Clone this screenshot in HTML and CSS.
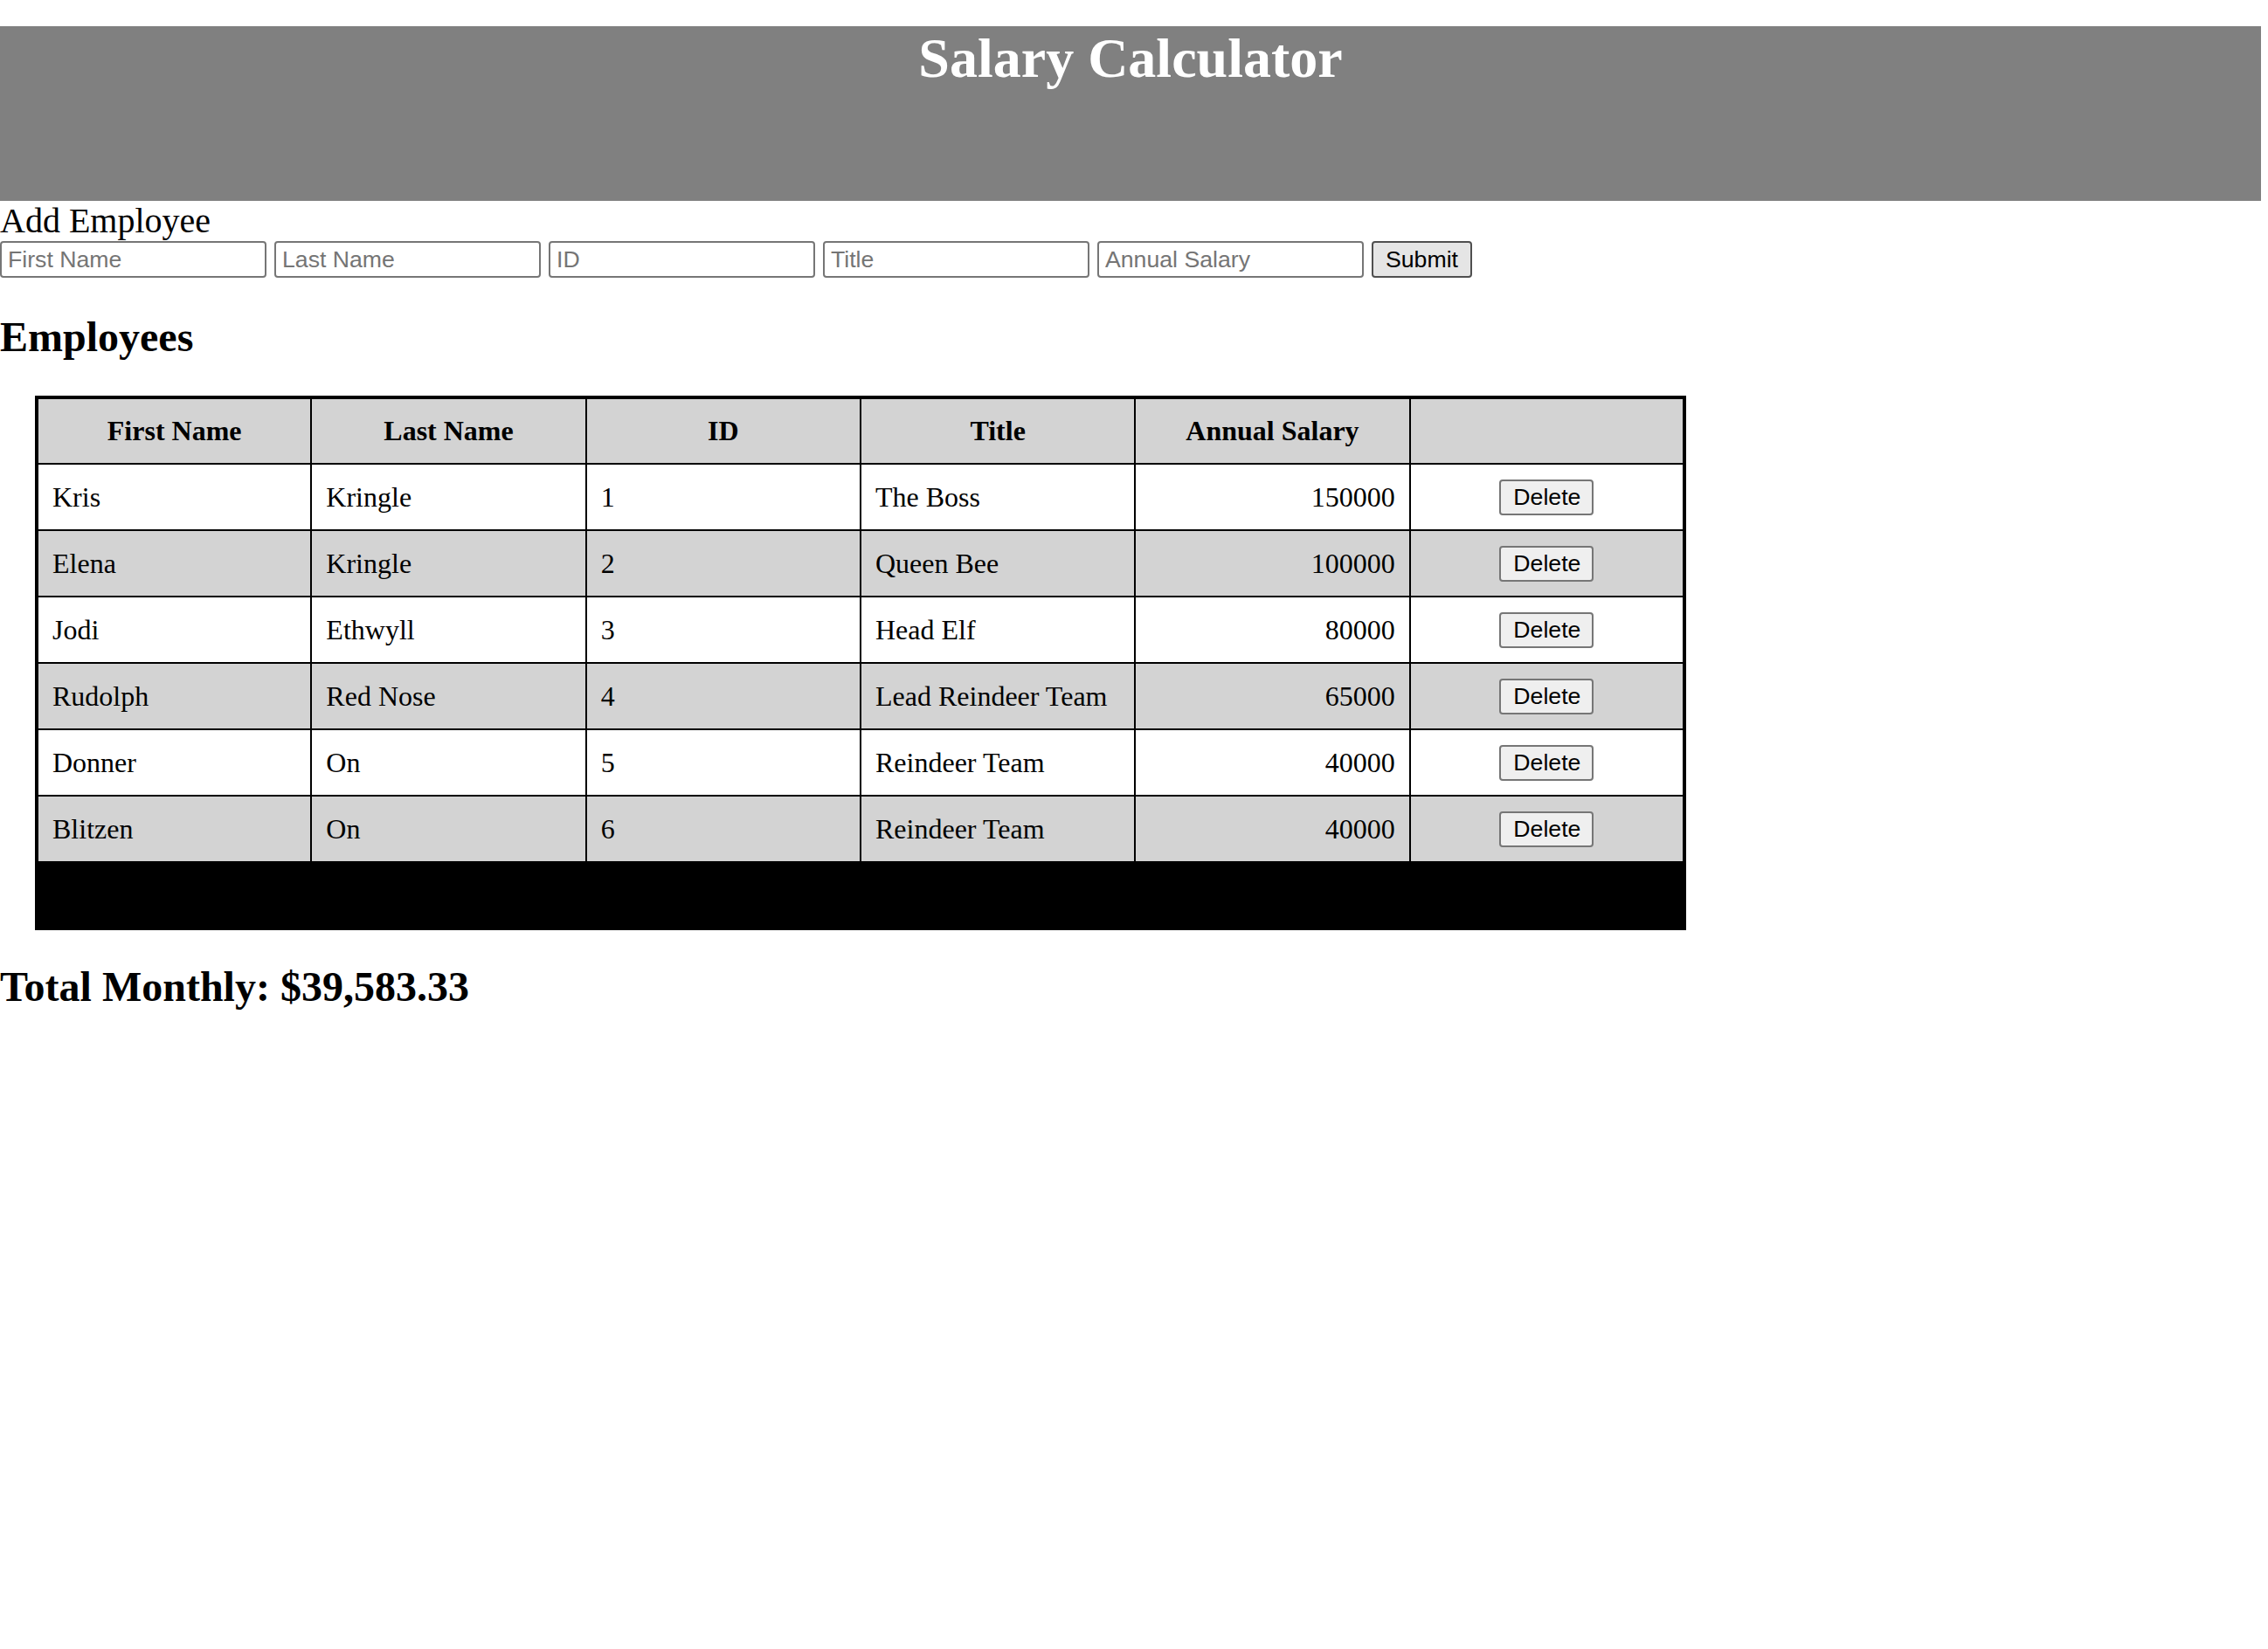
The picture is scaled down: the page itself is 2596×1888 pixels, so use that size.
FILE: index.html
```html
<!DOCTYPE html>
<html lang="en">
<head>
<meta charset="utf-8">
<title>Salary Calculator</title>
<link rel="stylesheet" href="styles.css">
</head>
<body>
<header class="site-header">
  <h1 class="site-title">Salary Calculator</h1>
</header>
<div class="add-label">Add Employee</div>
<form class="add-form">
  <input class="field" type="text" placeholder="First Name">
  <input class="field" type="text" placeholder="Last Name">
  <input class="field" type="text" placeholder="ID">
  <input class="field" type="text" placeholder="Title">
  <input class="field" type="text" placeholder="Annual Salary">
  <button class="btn btn-submit" type="button">Submit</button>
</form>
<h2 class="section-title">Employees</h2>
<table class="emp-table">
  <thead>
    <tr>
      <th>First Name</th>
      <th>Last Name</th>
      <th>ID</th>
      <th>Title</th>
      <th>Annual Salary</th>
      <th></th>
    </tr>
  </thead>
  <tbody>
    <tr>
      <td>Kris</td><td>Kringle</td><td>1</td><td>The Boss</td><td class="num">150000</td>
      <td class="act"><button class="btn btn-del" type="button">Delete</button></td>
    </tr>
    <tr>
      <td>Elena</td><td>Kringle</td><td>2</td><td>Queen Bee</td><td class="num">100000</td>
      <td class="act"><button class="btn btn-del" type="button">Delete</button></td>
    </tr>
    <tr>
      <td>Jodi</td><td>Ethwyll</td><td>3</td><td>Head Elf</td><td class="num">80000</td>
      <td class="act"><button class="btn btn-del" type="button">Delete</button></td>
    </tr>
    <tr>
      <td>Rudolph</td><td>Red Nose</td><td>4</td><td>Lead Reindeer Team</td><td class="num">65000</td>
      <td class="act"><button class="btn btn-del" type="button">Delete</button></td>
    </tr>
    <tr>
      <td>Donner</td><td>On</td><td>5</td><td>Reindeer Team</td><td class="num">40000</td>
      <td class="act"><button class="btn btn-del" type="button">Delete</button></td>
    </tr>
    <tr>
      <td>Blitzen</td><td>On</td><td>6</td><td>Reindeer Team</td><td class="num">40000</td>
      <td class="act"><button class="btn btn-del" type="button">Delete</button></td>
    </tr>
  </tbody>
  <tfoot>
    <tr class="foot-row">
      <td></td><td></td><td></td><td></td><td></td><td></td>
    </tr>
  </tfoot>
</table>
<h2 class="section-title total">Total Monthly: $39,583.33</h2>
</body>
</html>
```

FILE: styles.css
```css
html, body {
  margin: 0;
  padding: 0;
  background: #ffffff;
}

body {
  font-family: "Liberation Serif", "Times New Roman", serif;
  font-size: 32px;
  color: #000000;
}

.site-header {
  margin-top: 30px;
  width: calc(100% - 8px);
  height: 200px;
  background: #808080;
}

.site-title {
  margin: 0;
  text-align: center;
  font-size: 64px;
  font-weight: bold;
  color: #ffffff;
  line-height: 74px;
}

.add-label {
  font-size: 40px;
  line-height: 46px;
}

.add-form {
  display: flex;
  gap: 9px;
  align-items: stretch;
  height: 42px;
}

.field {
  box-sizing: border-box;
  width: 305px;
  height: 42px;
  margin: 0;
  padding: 2px 7px;
  border: 2px solid #767676;
  border-radius: 4px;
  background: #ffffff;
  font-family: "Liberation Sans", Arial, sans-serif;
  font-size: 26.67px;
  color: #000000;
}

.field::placeholder {
  color: #757575;
  opacity: 1;
}

.btn {
  box-sizing: border-box;
  margin: 0;
  height: 42px;
  padding: 2px 14px;
  border-radius: 4px;
  font-family: "Liberation Sans", Arial, sans-serif;
  font-size: 26.67px;
  color: #000000;
  cursor: pointer;
}

.btn-submit {
  width: 115px;
  background: #e5e5e5;
  border: 2px solid #4f4f4f;
}

.btn-del {
  width: 108px;
  height: 41px;
  background: #efefef;
  border: 2px solid #767676;
}

.section-title {
  margin: 40px 0;
  font-size: 48px;
  font-weight: bold;
  line-height: 55px;
}

.emp-table {
  margin-left: 40px;
  width: 1890px;
  table-layout: fixed;
  border-collapse: collapse;
  border: 4px solid #000000;
}

.emp-table tr {
  height: 76px;
}

.emp-table th,
.emp-table td {
  border: 2px solid #000000;
  padding: 0 16px;
  vertical-align: middle;
  text-align: left;
  font-size: 32px;
}

.emp-table th {
  text-align: center;
  font-weight: bold;
  background: #d3d3d3;
}

.emp-table tbody tr:nth-child(even) td {
  background: #d3d3d3;
}

.emp-table td.num {
  text-align: right;
}

.emp-table td.act {
  text-align: center;
}

.emp-table .foot-row td {
  background: #000000;
}

.total {
  margin-top: 37px;
}
```
